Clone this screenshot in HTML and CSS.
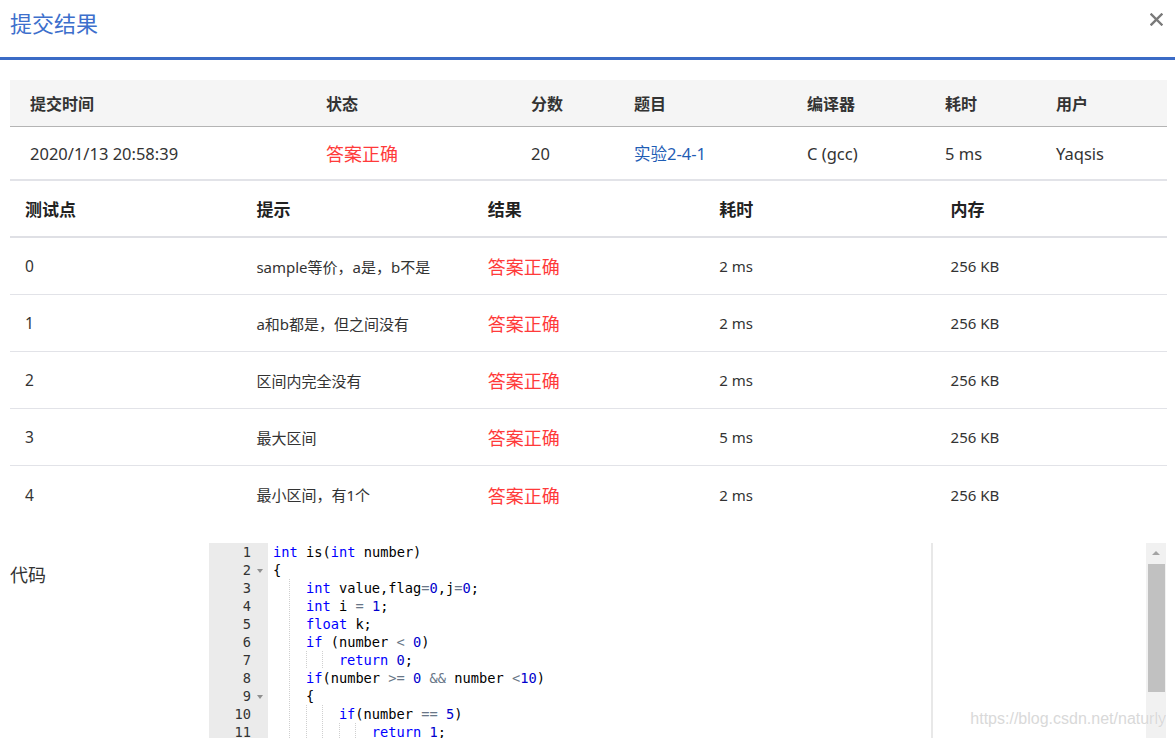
FILE: index.html
```html
<!DOCTYPE html>
<html lang="zh-CN">
<head>
<meta charset="utf-8">
<title>提交结果</title>
<link rel="stylesheet" href="styles.css">
</head>
<body>
<div class="dialog">
  <div class="dlg-head">
    <h1 class="title">提交结果</h1>
    <button class="close" aria-label="关闭">
      <svg width="13" height="13" viewBox="0 0 13 13"><path d="M1.5 1.5 L11.5 11.5 M11.5 1.5 L1.5 11.5" stroke="#7a7a7a" stroke-width="2.4" stroke-linecap="square" fill="none"/></svg>
    </button>
  </div>

  <div class="summary">
    <div class="sum-row sum-head">
      <div class="cell">提交时间</div>
      <div class="cell">状态</div>
      <div class="cell">分数</div>
      <div class="cell">题目</div>
      <div class="cell">编译器</div>
      <div class="cell">耗时</div>
      <div class="cell">用户</div>
    </div>
    <div class="sum-row sum-body">
      <div class="cell">2020/1/13 20:58:39</div>
      <div class="cell ok">答案正确</div>
      <div class="cell">20</div>
      <div class="cell"><a class="link" href="#">实验2-4-1</a></div>
      <div class="cell">C (gcc)</div>
      <div class="cell">5 ms</div>
      <div class="cell">Yaqsis</div>
    </div>
  </div>

  <div class="cases">
    <div class="case-row case-head">
      <div class="ccell">测试点</div>
      <div class="ccell">提示</div>
      <div class="ccell">结果</div>
      <div class="ccell">耗时</div>
      <div class="ccell">内存</div>
    </div>
    <div class="case-row">
      <div class="ccell num">0</div>
      <div class="ccell">sample等价，a是，b不是</div>
      <div class="ccell ok">答案正确</div>
      <div class="ccell">2 ms</div>
      <div class="ccell">256 KB</div>
    </div>
    <div class="case-row">
      <div class="ccell num">1</div>
      <div class="ccell">a和b都是，但之间没有</div>
      <div class="ccell ok">答案正确</div>
      <div class="ccell">2 ms</div>
      <div class="ccell">256 KB</div>
    </div>
    <div class="case-row">
      <div class="ccell num">2</div>
      <div class="ccell">区间内完全没有</div>
      <div class="ccell ok">答案正确</div>
      <div class="ccell">2 ms</div>
      <div class="ccell">256 KB</div>
    </div>
    <div class="case-row">
      <div class="ccell num">3</div>
      <div class="ccell">最大区间</div>
      <div class="ccell ok">答案正确</div>
      <div class="ccell">5 ms</div>
      <div class="ccell">256 KB</div>
    </div>
    <div class="case-row last">
      <div class="ccell num">4</div>
      <div class="ccell">最小区间，有1个</div>
      <div class="ccell ok">答案正确</div>
      <div class="ccell">2 ms</div>
      <div class="ccell">256 KB</div>
    </div>
  </div>

  <div class="code-sec">
    <div class="code-label">代码</div>
    <div class="editor">
      <div class="gutter">
        <div class="gl"><span>1</span><span class="fold"></span></div>
        <div class="gl"><span>2</span><span class="fold open"></span></div>
        <div class="gl"><span>3</span><span class="fold"></span></div>
        <div class="gl"><span>4</span><span class="fold"></span></div>
        <div class="gl"><span>5</span><span class="fold"></span></div>
        <div class="gl"><span>6</span><span class="fold"></span></div>
        <div class="gl"><span>7</span><span class="fold"></span></div>
        <div class="gl"><span>8</span><span class="fold"></span></div>
        <div class="gl"><span>9</span><span class="fold open"></span></div>
        <div class="gl"><span>10</span><span class="fold"></span></div>
        <div class="gl"><span>11</span><span class="fold"></span></div>
      </div>
      <div class="code">
        <div class="ln"><span class="k">int</span> is(<span class="k">int</span> number)</div>
        <div class="ln">{</div>
        <div class="ln"><span class="ind">  </span><span class="ind">  </span><span class="k">int</span> value,flag<span class="o">=</span><span class="n">0</span>,j<span class="o">=</span><span class="n">0</span>;</div>
        <div class="ln"><span class="ind">  </span><span class="ind">  </span><span class="k">int</span> i <span class="o">=</span> <span class="n">1</span>;</div>
        <div class="ln"><span class="ind">  </span><span class="ind">  </span><span class="k">float</span> k;</div>
        <div class="ln"><span class="ind">  </span><span class="ind">  </span><span class="k">if</span> (number <span class="o">&lt;</span> <span class="n">0</span>)</div>
        <div class="ln"><span class="ind">  </span><span class="ind">  </span><span class="ind">  </span><span class="ind">  </span><span class="k">return</span> <span class="n">0</span>;</div>
        <div class="ln"><span class="ind">  </span><span class="ind">  </span><span class="k">if</span>(number <span class="o">&gt;=</span> <span class="n">0</span> <span class="o">&amp;&amp;</span> number <span class="o">&lt;</span><span class="n">10</span>)</div>
        <div class="ln"><span class="ind">  </span><span class="ind">  </span>{</div>
        <div class="ln"><span class="ind">  </span><span class="ind">  </span><span class="ind">  </span><span class="ind">  </span><span class="k">if</span>(number <span class="o">==</span> <span class="n">5</span>)</div>
        <div class="ln"><span class="ind">  </span><span class="ind">  </span><span class="ind">  </span><span class="ind">  </span><span class="ind">  </span><span class="ind">  </span><span class="k">return</span> <span class="n">1</span>;</div>
      </div>
      <div class="sb">
        <div class="sb-up"></div>
        <div class="sb-thumb"></div>
      </div>
      <div class="watermark">https://blog.csdn.net/naturly</div>
    </div>
  </div>
</div>
</body>
</html>
```

FILE: styles.css
```css
html, body {
  margin: 0;
  padding: 0;
  background: #fff;
}
body {
  font-family: "Noto Sans", "Noto Sans CJK SC", sans-serif;
  color: #333;
  overflow: hidden;
  height: 738px;
}

.dlg-head {
  display: flex;
  justify-content: space-between;
  align-items: flex-start;
  height: 57px;
  border-bottom: 3px solid #3b6bc6;
  padding: 0 12px 0 10px;
}
.title {
  margin: 0;
  font-weight: normal;
  font-size: 22px;
  line-height: 44px;
  color: #3d6fcc;
  font-family: "Noto Sans CJK SC", sans-serif;
}
.close {
  margin-top: 13px;
  width: 13px;
  height: 13px;
  padding: 0;
  border: 0;
  background: none;
  display: block;
}
.close svg { display: block; }

/* summary table */
.summary {
  margin: 20px 8px 0 10px;
}
.sum-row {
  display: grid;
  grid-template-columns: 296px 205px 103px 173px 138px 111px 1fr;
  align-items: center;
}
.sum-head {
  height: 46px;
  background: #f5f5f5;
  border-bottom: 1px solid #b4b4b4;
  font-size: 16px;
  font-weight: bold;
  color: #333;
}
.sum-body {
  height: 52px;
  border-bottom: 2px solid #e2e3e8;
  font-size: 16.5px;
}
.cell {
  padding-left: 20px;
  white-space: nowrap;
}
.ok {
  color: #ff3a3a;
  font-size: 18px;
  font-family: "Noto Sans CJK SC", sans-serif;
}
.sum-body .ok { font-size: 18px; }
.link {
  color: #1f5db5;
  text-decoration: none;
}

/* test cases table */
.cases {
  margin: 0 8px 0 10px;
}
.case-row {
  display: grid;
  grid-template-columns: repeat(5, 1fr);
  align-items: center;
  height: 56px;
  border-bottom: 1px solid #e2e3e8;
  font-size: 15px;
}
.case-row.last {
  border-bottom: 0;
  height: 57px;
}
.case-head {
  height: 55px;
  border-bottom: 2px solid #dfe0e5;
  font-size: 17px;
  font-weight: bold;
  color: #222;
}
.ccell {
  padding-left: 15px;
  white-space: nowrap;
}
.ccell.num { font-size: 15.5px; }
.ccell.ok { font-size: 18px; }

/* code */
.code-sec {
  display: flex;
  margin: 20px 9px 0 10px;
}
.code-label {
  width: 199px;
  flex: none;
  font-size: 18px;
  line-height: 24px;
  padding-top: 19px;
  color: #333;
  font-family: "Noto Sans CJK SC", sans-serif;
}
.editor {
  flex: 1;
  display: flex;
  height: 200px;
  position: relative;
  font-family: "DejaVu Sans Mono", monospace;
  font-size: 13.7px;
  line-height: 18px;
  color: #000;
  overflow: hidden;
}
.gutter {
  width: 59px;
  flex: none;
  background: #ebebeb;
  color: #333;
}
.gl {
  display: flex;
  justify-content: flex-end;
  align-items: center;
  height: 18px;
  padding-right: 4px;
}
.fold {
  width: 13px;
  height: 18px;
  position: relative;
}
.fold.open::after {
  content: "";
  position: absolute;
  left: 6px;
  top: 8px;
  border-left: 3px solid transparent;
  border-right: 3px solid transparent;
  border-top: 4px solid #8f8f8f;
}
.code {
  flex: 1;
  padding-left: 5px;
  background-image: linear-gradient(#e8e8e8, #e8e8e8);
  background-repeat: no-repeat;
  background-size: 2px 100%;
  background-position: calc(5px + 80ch - 1px) 0;
}
.ln {
  height: 18px;
  white-space: pre;
}
.ind {
  display: inline-block;
  width: 2ch;
  height: 18px;
  vertical-align: top;
}
.ind + .ind {
  background-image: repeating-linear-gradient(to bottom, #cfcfcf 0 1px, transparent 1px 2px);
  background-repeat: no-repeat;
  background-size: 1px 100%;
  background-position: 0 0;
}
.k { color: #0000ff; }
.n { color: #0000cd; }
.o { color: #687687; }

.sb {
  width: 20px;
  flex: none;
  background: #f1f1f1;
}
.sb-up {
  height: 21px;
  position: relative;
}
.sb-up::after {
  content: "";
  position: absolute;
  left: 6px;
  top: 8px;
  border-left: 4px solid transparent;
  border-right: 4px solid transparent;
  border-bottom: 4px solid #a3a3a3;
}
.sb-thumb {
  margin: 0 1px 0 2px;
  height: 128px;
  background: #c1c1c1;
}
.watermark {
  position: absolute;
  right: 0;
  top: 166px;
  font-family: "Liberation Sans", Arial, sans-serif;
  font-size: 16px;
  line-height: 20px;
  color: #d9d9d9;
  text-shadow: 0 0 1px #fff;
  white-space: nowrap;
}
```
